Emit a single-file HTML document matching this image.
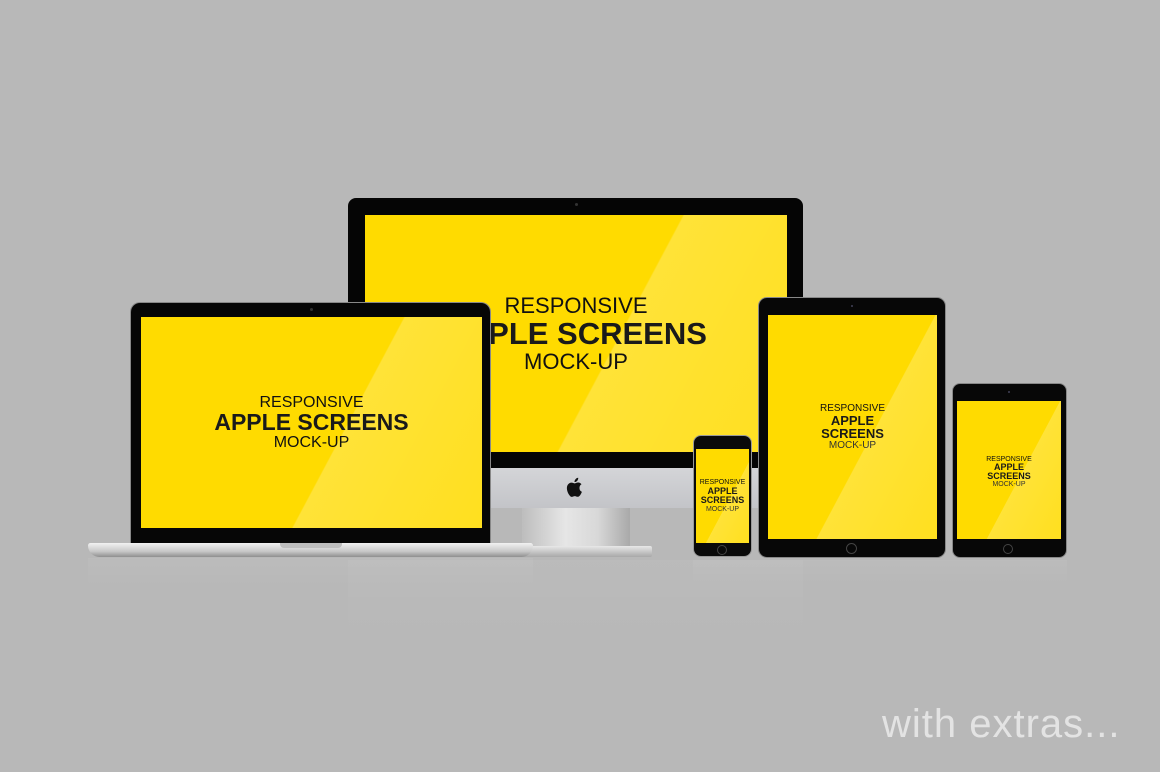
<!DOCTYPE html>
<html><head><meta charset="utf-8">
<style>
html,body{margin:0;padding:0}
body{width:1160px;height:772px;background:#b8b8b8;position:relative;overflow:hidden;font-family:"Liberation Sans",sans-serif}
.a{position:absolute}
.scr{background:#ffdb00;overflow:hidden}
.glare{position:absolute;inset:0;background:linear-gradient(118deg,rgba(255,255,255,0) 58%,rgba(255,255,255,0.22) 58.3%,rgba(255,255,255,0.12) 100%)}
.t{position:absolute;left:0;right:0;text-align:center;color:#111;line-height:1}
.b{font-weight:bold;color:#1a1a1a}
.hb{position:absolute;border:1.5px solid #444;border-radius:50%}
</style></head><body>

<!-- iMac -->
<div class="a" style="left:348px;top:198px;width:455px;height:270px;background:#050505;border-radius:8px 8px 0 0"></div>
<div class="a" style="left:575px;top:203px;width:3px;height:3px;background:#333;border-radius:50%"></div>
<div class="a scr" style="left:365px;top:215px;width:422px;height:237px">
  <div class="glare"></div>
  <div class="t" style="top:80px;font-size:22px">RESPONSIVE</div>
  <div class="t b" style="top:103px;font-size:31px">APPLE SCREENS</div>
  <div class="t" style="top:136px;font-size:22px">MOCK-UP</div>
</div>
<div class="a" style="left:348px;top:468px;width:455px;height:40px;background:linear-gradient(#d4d5d8,#c3c4c8);border-radius:0 0 6px 6px"></div>
<svg class="a" style="left:566px;top:476px" width="20" height="22" viewBox="0 0 20 22"><path d="M13.5 11.8c0-2.3 1.9-3.4 2-3.5-1.1-1.6-2.8-1.8-3.4-1.8-1.4-.1-2.8.9-3.5.9-.7 0-1.8-.8-3-.8C4 6.6 2.5 7.5 1.7 8.9c-1.7 2.9-.4 7.2 1.200 9.6.8 1.2 1.7 2.4 2.9 2.4 1.2 0 1.6-.8 3-.8s1.8.8 3 .7c1.3 0 2.1-1.2 2.8-2.300.9-1.3 1.3-2.6 1.3-2.7 0 0-2.4-.9-2.4-3.6zM11.3 4.7c.6-.8 1.1-1.8.9-2.9-.9 0-2 .6-2.7 1.4-.6.7-1.1 1.8-1 2.8 1.1.1 2.1-.5 2.8-1.3z" fill="#111"/></svg>
<div class="a" style="left:522px;top:508px;width:108px;height:38px;background:linear-gradient(90deg,#bdbdbd,#e6e6e6 40%,#d8d8d8 70%,#a9a9a9)"></div>
<div class="a" style="left:512px;top:546px;width:140px;height:11px;background:linear-gradient(#e8e8e8,#a8a8a8);border-radius:2px"></div>
<div class="a" style="left:348px;top:560px;width:455px;height:80px;background:linear-gradient(rgba(255,255,255,0.04),rgba(255,255,255,0))"></div>

<!-- Laptop -->
<div class="a" style="left:130px;top:302px;width:361px;height:242px;background:#060606;border-radius:10px 10px 0 0;border:1px solid #888;border-bottom:none;box-sizing:border-box"></div>
<div class="a" style="left:310px;top:308px;width:3px;height:3px;background:#333;border-radius:50%"></div>
<div class="a scr" style="left:141px;top:317px;width:341px;height:211px">
  <div class="glare"></div>
  <div class="t" style="top:78px;font-size:16px">RESPONSIVE</div>
  <div class="t b" style="top:94px;font-size:23px">APPLE SCREENS</div>
  <div class="t" style="top:118px;font-size:16px">MOCK-UP</div>
</div>
<div class="a" style="left:88px;top:543px;width:445px;height:14px;background:linear-gradient(#f2f2f2,#c7c7c7 60%,#8f8f8f);border-radius:3px 3px 14px 14px"></div>
<div class="a" style="left:280px;top:543px;width:62px;height:5px;background:#bdbdbd;border-radius:0 0 4px 4px"></div>
<div class="a" style="left:88px;top:558px;width:445px;height:30px;background:linear-gradient(rgba(255,255,255,0.05),rgba(255,255,255,0))"></div>

<!-- iPhone -->
<div class="a" style="left:693px;top:435px;width:59px;height:122px;background:#0a0a0a;border-radius:8px;border:1px solid #999;box-sizing:border-box"></div>
<div class="a scr" style="left:696px;top:449px;width:53px;height:94px">
  <div class="glare"></div>
  <div class="t" style="top:30px;font-size:7px">RESPONSIVE</div>
  <div class="t b" style="top:38px;font-size:9px">APPLE<br>SCREENS</div>
  <div class="t" style="top:57px;font-size:7px;color:#333">MOCK-UP</div>
</div>
<div class="hb" style="left:717px;top:545px;width:8px;height:8px"></div>

<!-- iPad Pro -->
<div class="a" style="left:758px;top:297px;width:188px;height:261px;background:#070707;border-radius:9px;border:1px solid #888;box-sizing:border-box"></div>
<div class="a" style="left:851px;top:305px;width:2px;height:2px;background:#334"></div>
<div class="a scr" style="left:768px;top:315px;width:169px;height:224px">
  <div class="glare"></div>
  <div class="t" style="top:89px;font-size:10px">RESPONSIVE</div>
  <div class="t b" style="top:99px;font-size:13px;line-height:13px">APPLE<br>SCREENS</div>
  <div class="t" style="top:126px;font-size:10px;color:#333">MOCK-UP</div>
</div>
<div class="hb" style="left:846px;top:543px;width:9px;height:9px"></div>

<!-- iPad mini -->
<div class="a" style="left:952px;top:383px;width:115px;height:175px;background:#070707;border-radius:8px;border:1px solid #888;box-sizing:border-box"></div>
<div class="a" style="left:1008px;top:391px;width:2px;height:2px;background:#334"></div>
<div class="a scr" style="left:957px;top:401px;width:104px;height:138px">
  <div class="glare"></div>
  <div class="t" style="top:55px;font-size:7px">RESPONSIVE</div>
  <div class="t b" style="top:62px;font-size:9px;line-height:9px">APPLE<br>SCREENS</div>
  <div class="t" style="top:80px;font-size:7px;color:#333">MOCK-UP</div>
</div>
<div class="hb" style="left:1003px;top:544px;width:8px;height:8px"></div>

<div class="a" style="left:693px;top:560px;width:374px;height:25px;background:linear-gradient(rgba(255,255,255,0.05),rgba(255,255,255,0))"></div>

<div class="a" style="left:882px;top:704px;font-size:40px;color:#e3e3e3;line-height:1;letter-spacing:1px">with extras...</div>
</body></html>
